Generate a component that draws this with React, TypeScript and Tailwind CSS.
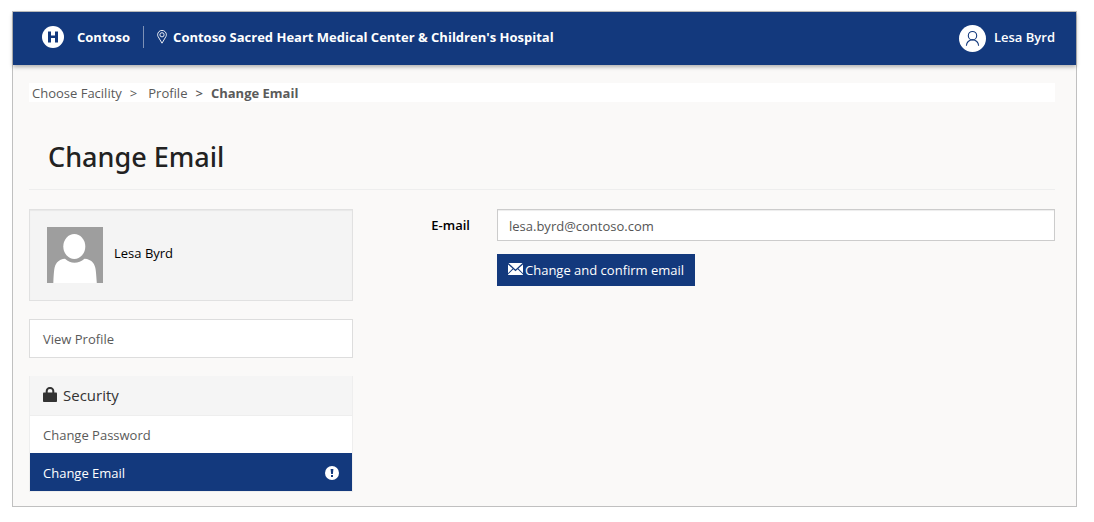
import React from "react";

function HospitalLogo() {
  return (
    <svg className="size-[22px] shrink-0" viewBox="0 0 22 22" aria-hidden="true">
      <circle cx="11" cy="11" r="11" fill="#fff" />
      <path d="M6 5.500h3v4h4v-4h3v11h-3V12H9v4.500H6z" fill="#13397d" />
    </svg>
  );
}

function PinIcon() {
  return (
    <svg className="h-[14px] w-[10px] shrink-0" viewBox="0 0 10 14" fill="none" stroke="#fff" strokeWidth="0.9" aria-hidden="true">
      <path d="M5 13.2 1.1 6.6A4.4 4.4 0 0 1 .6 4.8a4.4 4.4 0 0 1 8.8 0 4.4 4.4 0 0 1-.5 1.8z" />
      <circle cx="5" cy="4.8" r="2.1" />
    </svg>
  );
}

function PersonIcon() {
  return (
    <svg className="size-[27px] shrink-0" viewBox="0 0 27 27" aria-hidden="true">
      <circle cx="13.5" cy="13.5" r="13.5" fill="#fff" />
      <g fill="none" stroke="#13397d" strokeWidth="1.1">
        <circle cx="13.5" cy="10.7" r="4.2" />
        <path d="M7.4 20.8a6.1 6.1 0 0 1 12.2 0" />
      </g>
    </svg>
  );
}

function AvatarPicture() {
  return (
    <svg className="size-14 shrink-0" viewBox="0 0 56 56" role="img" aria-label="Profile photo">
      <path d="M0 0h56v56H0z" fill="#9e9e9e" />
      <ellipse cx="27.3" cy="19.5" rx="11" ry="12.5" fill="#fff" />
      <path d="M6.300 56C7 44 7 39 10 35.500c2-2.300 5-3.500 8-3.700 3 2.700 6 4 9.500 4s7-1.300 10-4c3.500.2 6.500 1.500 8.500 4C49 39.500 49 45 49.800 56z" fill="#fff" />
    </svg>
  );
}

function LockIcon() {
  return (
    <svg className="h-[15px] w-[14px] shrink-0" viewBox="0 0 14 15" aria-hidden="true">
      <path d="M3.700 6V4a3 3 0 0 1 3-3h.6a3 3 0 0 1 3 3v2" fill="none" stroke="#333" strokeWidth="2" />
      <rect y="5.500" width="14" height="9.500" rx="0.8" fill="#333" />
    </svg>
  );
}

function EnvelopeIcon() {
  return (
    <svg className="mb-[2px] h-3 w-[15px] shrink-0" viewBox="0 0 15 12" fill="#fff" aria-hidden="true">
      <path d="M.5 0h14L7.500 6.500z" />
      <path d="M0 1.400 4.600 5.600 0 10.300zM15 1.400 10.400 5.600 15 10.300z" />
      <path d="M5.300 6.300 7.500 8.300 9.700 6.300 15 11.500V12H0v-.5z" />
    </svg>
  );
}

function AlertIcon() {
  return (
    <svg className="size-[14px] shrink-0" viewBox="0 0 14 14" aria-hidden="true">
      <circle cx="7" cy="7" r="7" fill="#fff" />
      <path d="M5.600 3h2.800l-.5 5H6.100zM6 9h2v2H6z" fill="#13397d" />
    </svg>
  );
}

export default function App() {
  return (
    <div className="bg-white pt-[11px] pr-[17px] pb-[15px] pl-3 font-['Open_Sans',sans-serif] text-[13px] leading-5 text-[#5a5a5a]">
      <div className="border border-[#c0c0c0] bg-[#faf9f8]">
        <header className="flex h-[53px] items-center justify-between bg-[#13397d] pr-[21px] pl-[29px] text-white shadow-[0_2px_4px_rgba(0,0,0,0.3)]">
          <div className="flex items-center pb-1 font-bold">
            <HospitalLogo />
            <a href="#" className="pl-[13px]">Contoso</a>
            <span className="mx-[13px] h-[22px] w-px bg-[#7d91b6]" />
            <PinIcon />
            <a href="#" className="pl-[6px]">Contoso Sacred Heart Medical Center &amp; Children's Hospital</a>
          </div>
          <a href="#" className="flex items-center gap-2 font-semibold">
            <PersonIcon />
            <span className="pb-1">Lesa Byrd</span>
          </a>
        </header>

        <main className="pt-[18px] pr-[21px] pb-[14px] pl-4">
          <nav aria-label="Breadcrumb" className="h-[19px] bg-white px-[3px]">
            <ol className="flex items-center">
              <li><a href="#">Choose Facility</a></li>
              <li className="px-2" aria-hidden="true">&gt;</li>
              <li className="pl-[3px]"><a href="#">Profile</a></li>
              <li className="px-2 font-semibold" aria-hidden="true">&gt;</li>
              <li className="font-bold" aria-current="page">Change Email</li>
            </ol>
          </nav>

          <div className="mt-[35px] border-b border-[#eeeeee] pb-[13px] pl-[19px]">
            <h1 className="font-['Noto_Sans',sans-serif] text-[27px] leading-[39px] font-medium text-[#222222]">Change Email</h1>
          </div>

          <div className="mt-[19px] grid grid-cols-[324fr_702fr]">
            <aside>
              <div className="flex items-center gap-[11px] border border-[#e1e1e1] bg-[#f4f4f4] p-[17px] text-black shadow-[inset_0_1px_1px_rgba(0,0,0,0.05)]">
                <AvatarPicture />
                <span className="pb-1">Lesa Byrd</span>
              </div>
              <a href="#" className="mt-[18px] block border border-[#dddddd] bg-white px-[13px] pt-[9px] pb-2">View Profile</a>
              <section className="mt-[18px] border border-t-0 border-[#eeeeee] bg-white">
                <h2 className="flex h-10 items-center gap-[6px] border-b border-[#eeeeee] bg-[#f5f5f5] px-[13px] pb-[2px] text-[15px] text-[#333333]">
                  <LockIcon />
                  Security
                </h2>
                <a href="#" className="block px-[13px] pt-[9px] pb-2">Change Password</a>
                <a href="#" className="flex items-center justify-between bg-[#13397d] px-[13px] pt-[10px] pb-2 text-white">
                  Change Email
                  <AlertIcon />
                </a>
              </section>
            </aside>

            <form className="grid grid-cols-[144fr_558fr] content-start gap-y-[13px]" onSubmit={(e) => e.preventDefault()}>
              <label htmlFor="email" className="pt-[6px] pr-[27px] text-right font-semibold text-black">E-mail</label>
              <input
                id="email"
                type="email"
                defaultValue="lesa.byrd@contoso.com"
                className="h-8 w-full border border-[#cccccc] bg-white px-[11px] pt-[2px] text-[#555555] shadow-[inset_0_1px_1px_rgba(0,0,0,0.075)] outline-none"
              />
              <button type="submit" className="col-start-2 flex h-8 items-center gap-[2px] justify-self-start bg-[#13397d] px-[11px] text-white">
                <EnvelopeIcon />
                Change and confirm email
              </button>
            </form>
          </div>
        </main>
      </div>
    </div>
  );
}
